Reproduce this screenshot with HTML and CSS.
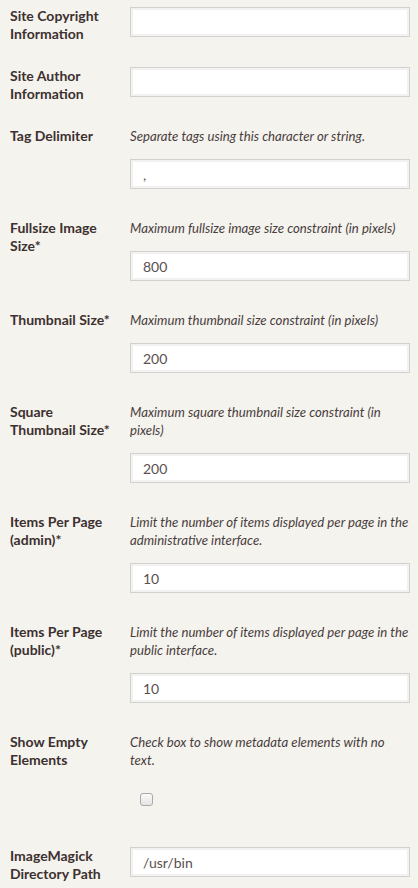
FILE: index.html
```html
<!DOCTYPE html>
<html>
<head>
<meta charset="utf-8">
<link rel="stylesheet" href="styles.css">
</head>
<body>
<form class="settings">
  <div class="field">
    <label class="label">Site Copyright Information</label>
    <div class="inputs"><input class="text" type="text" value=""></div>
  </div>
  <div class="field">
    <label class="label">Site Author Information</label>
    <div class="inputs"><input class="text" type="text" value=""></div>
  </div>
  <div class="field">
    <label class="label">Tag Delimiter</label>
    <div class="inputs">
      <p class="explanation">Separate tags using this character or string.</p>
      <input class="text" type="text" value=",">
    </div>
  </div>
  <div class="field">
    <label class="label">Fullsize Image Size*</label>
    <div class="inputs">
      <p class="explanation">Maximum fullsize image size constraint (in pixels)</p>
      <input class="text" type="text" value="800">
    </div>
  </div>
  <div class="field">
    <label class="label">Thumbnail Size*</label>
    <div class="inputs">
      <p class="explanation">Maximum thumbnail size constraint (in pixels)</p>
      <input class="text" type="text" value="200">
    </div>
  </div>
  <div class="field">
    <label class="label">Square Thumbnail Size*</label>
    <div class="inputs">
      <p class="explanation">Maximum square thumbnail size constraint (in pixels)</p>
      <input class="text" type="text" value="200">
    </div>
  </div>
  <div class="field">
    <label class="label">Items Per Page (admin)*</label>
    <div class="inputs">
      <p class="explanation">Limit the number of items displayed per page in the administrative interface.</p>
      <input class="text" type="text" value="10">
    </div>
  </div>
  <div class="field">
    <label class="label">Items Per Page (public)*</label>
    <div class="inputs">
      <p class="explanation">Limit the number of items displayed per page in the public interface.</p>
      <input class="text" type="text" value="10">
    </div>
  </div>
  <div class="field">
    <label class="label">Show Empty Elements</label>
    <div class="inputs">
      <p class="explanation">Check box to show metadata elements with no text.</p>
      <div class="check-wrap"><span class="checkbox"></span></div>
    </div>
  </div>
  <div class="field">
    <label class="label">ImageMagick Directory Path</label>
    <div class="inputs"><input class="text" type="text" value="/usr/bin"></div>
  </div>
</form>
</body>
</html>
```
FILE: styles.css
```css
html, body {
  margin: 0;
  padding: 0;
  background: #f4f3ee;
}
body {
  font-family: Lato, "Open Sans", sans-serif;
  color: #3d3030;
  height: 888px;
  overflow: hidden;
}
.settings {
  padding: 7px 8px 0 10px;
}
.field {
  display: flex;
  align-items: flex-start;
}
.label {
  width: 110px;
  margin-right: 10px;
  flex: none;
  font-weight: 700;
  font-size: 14px;
  line-height: 18px;
  color: #3d3030;
}
.inputs {
  width: 280px;
  flex: none;
}
.explanation {
  margin: 0 0 14px;
  font-style: italic;
  font-size: 13.2px;
  line-height: 18px;
  color: #4a3d3d;
}
.text {
  display: block;
  box-sizing: border-box;
  width: 280px;
  height: 30px;
  margin: 0 0 30px;
  padding: 0 12px;
  border: 1px solid #d3d1cd;
  border-radius: 0;
  background: #fff;
  box-shadow: inset 0 0 0 2px #f2f2f2;
  font-family: Lato, "Open Sans", sans-serif;
  font-size: 14px;
  color: #5a5050;
  outline: none;
}
.check-wrap {
  height: 34px;
  margin-bottom: 30px;
  padding: 10px 0 0 10px;
  box-sizing: border-box;
}
.checkbox {
  display: block;
  width: 11px;
  height: 11px;
  border: 1px solid #a9a9a9;
  border-radius: 3px;
  background: linear-gradient(#fafafa, #e4e4e4);
}
```
